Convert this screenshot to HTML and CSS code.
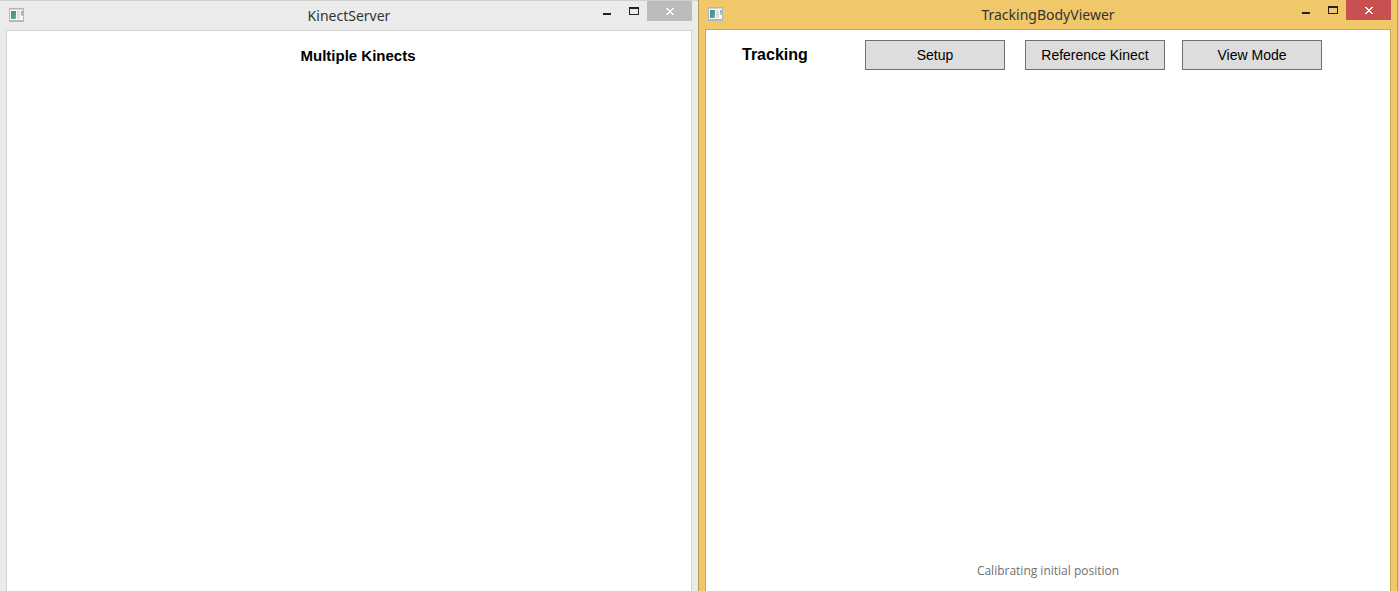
FILE: index.html
```html
<!DOCTYPE html>
<html lang="en">
<head>
<meta charset="utf-8">
<title>Kinect</title>
<link rel="stylesheet" href="styles.css">
</head>
<body>
<main class="desktop">
  <section class="window inactive">
    <header class="titlebar">
      <svg class="app-icon" width="16" height="14" viewBox="0 0 16 14" aria-hidden="true">
        <defs>
          <linearGradient id="screen" x1="0" y1="0" x2="1" y2="1"><stop offset="0" stop-color="#4d7fa6"/><stop offset=".6" stop-color="#4aa08a"/><stop offset="1" stop-color="#7dbb98"/></linearGradient>
          <linearGradient id="side" x1="0" y1="0" x2="0" y2="1"><stop offset="0" stop-color="#8ea6dc"/><stop offset="1" stop-color="#a5dfa0"/></linearGradient>
        </defs>
        <path fill="#b3b7bb" d="M0 0h15v14H0z"/><path fill="#d0d5dc" d="M1 1h13v1H1z"/><path fill="#fafafa" d="M1 2h13v10H1z"/>
        <path fill="url(#screen)" d="M2 3h5v8H2z"/><path fill="#dedee2" d="M8 3h3v8H8z"/><path fill="url(#side)" d="M12 3h2v5h-2z"/>
      </svg>
      <h1 class="title">KinectServer</h1>
      <div class="controls">
        <button class="control" aria-label="Minimize"><svg width="10" height="10" viewBox="0 0 10 10" shape-rendering="crispEdges"><path fill="#222" d="M1 6h8v2H1z"/></svg></button>
        <button class="control" aria-label="Maximize"><svg width="10" height="10" viewBox="0 0 10 10" shape-rendering="crispEdges"><path fill="#222" fill-rule="evenodd" d="M0 0h10v8H0zM1 2v5h8V2z"/></svg></button>
        <button class="control close" aria-label="Close"><svg width="8" height="7" viewBox="0 0 8 7" shape-rendering="crispEdges"><path fill="#fff" d="M0 0h2v1h1v1h2V1h1V0h2v1H7v1H6v1H5v1h1v1h1v1h1v1H6V6H5V5H3v1H2v1H0V6h1V5h1V4h1V3H2V2H1V1H0z"/></svg></button>
      </div>
    </header>
    <div class="client">
      <h2 class="heading centered">Multiple Kinects</h2>
    </div>
  </section>
  <section class="window active">
    <header class="titlebar">
      <svg class="app-icon" width="16" height="14" viewBox="0 0 16 14" aria-hidden="true">
        <path fill="#b3b7bb" d="M0 0h15v14H0z"/><path fill="#d0d5dc" d="M1 1h13v1H1z"/><path fill="#fafafa" d="M1 2h13v10H1z"/>
        <path fill="url(#screen)" d="M2 3h5v8H2z"/><path fill="#dedee2" d="M8 3h3v8H8z"/><path fill="url(#side)" d="M12 3h2v5h-2z"/>
      </svg>
      <h1 class="title">TrackingBodyViewer</h1>
      <div class="controls">
        <button class="control" aria-label="Minimize"><svg width="10" height="10" viewBox="0 0 10 10" shape-rendering="crispEdges"><path fill="#222" d="M1 6h8v2H1z"/></svg></button>
        <button class="control" aria-label="Maximize"><svg width="10" height="10" viewBox="0 0 10 10" shape-rendering="crispEdges"><path fill="#222" fill-rule="evenodd" d="M0 0h10v8H0zM1 2v5h8V2z"/></svg></button>
        <button class="control close" aria-label="Close"><svg width="8" height="7" viewBox="0 0 8 7" shape-rendering="crispEdges"><path fill="#fff" d="M0 0h2v1h1v1h2V1h1V0h2v1H7v1H6v1H5v1h1v1h1v1h1v1H6V6H5V5H3v1H2v1H0V6h1V5h1V4h1V3H2V2H1V1H0z"/></svg></button>
      </div>
    </header>
    <div class="client">
      <div class="toolbar">
        <h2 class="heading">Tracking</h2>
        <button class="button setup">Setup</button>
        <button class="button reference">Reference Kinect</button>
        <button class="button">View Mode</button>
      </div>
      <p class="status">Calibrating initial position</p>
    </div>
  </section>
</main>
</body>
</html>
```

FILE: styles.css
```css
* { box-sizing: border-box; }
body { margin: 0; }
.desktop {
  display: grid;
  grid-template-columns: 698fr 700fr;
  min-height: 100vh;
}
.window {
  display: flex;
  flex-direction: column;
  padding: 0 6px;
}
.inactive { background: #ebebeb; border-top: 1px solid #d0d0d0; }
.active {
  background: #f0c869;
  border: solid #b89b55;
  border-width: 0 1px;
}
.titlebar {
  display: grid;
  grid-template-columns: 135px 1fr 135px;
  align-items: start;
  height: 29px;
}
.app-icon { margin: 7px 0 0 3px; }
.title {
  margin: 0;
  font: 400 14px/29px "Noto Sans", sans-serif;
  color: #333;
  text-align: center;
}
.controls { display: flex; justify-content: flex-end; }
.control {
  display: flex;
  justify-content: center;
  width: 27px;
  height: 20px;
  padding: 6px 0 0;
  border: 0;
  background: transparent;
}
.close { width: 45px; padding-top: 7px; background: #bcbcbc; }
.active .close { background: #c75050; }
.client {
  flex: 1;
  display: flex;
  flex-direction: column;
  background: #fff;
  border: 1px solid #d5d5d5;
  border-bottom: 0;
}
.active .client { border-color: #c8a551; }
.heading {
  margin: 0;
  font: 700 16px/30px "Liberation Sans", Arial, sans-serif;
  color: #000;
}
.centered { padding: 10px 0 0 18px; font-size: 15px; text-align: center; }
.toolbar { display: flex; padding: 10px 0 0 36px; }
.toolbar .heading { width: 123px; }
.button {
  width: 140px;
  height: 30px;
  padding: 0;
  background: #ddd;
  border: 1px solid #707070;
  font: 14px "Liberation Sans", Arial, sans-serif;
  color: #000;
}
.setup { margin-right: 20px; }
.reference { margin-right: 17px; }
.status {
  margin: auto 0 0;
  padding-bottom: 10px;
  font: 12px/20px "Open Sans", "Noto Sans", sans-serif;
  color: #707070;
  text-align: center;
}
```
